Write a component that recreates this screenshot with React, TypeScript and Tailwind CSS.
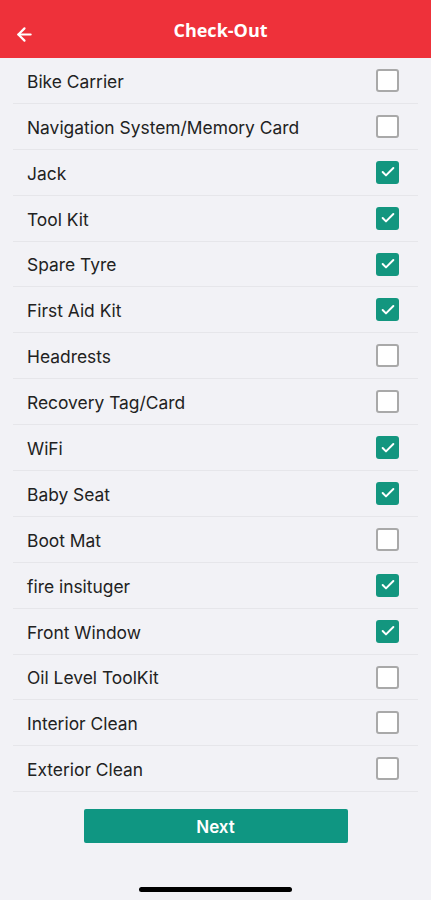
import { ArrowLeft, Check } from "lucide-react";

const items = [
  { label: "Bike Carrier", checked: false },
  { label: "Navigation System/Memory Card", checked: false },
  { label: "Jack", checked: true },
  { label: "Tool Kit", checked: true },
  { label: "Spare Tyre", checked: true },
  { label: "First Aid Kit", checked: true },
  { label: "Headrests", checked: false },
  { label: "Recovery Tag/Card", checked: false },
  { label: "WiFi", checked: true },
  { label: "Baby Seat", checked: true },
  { label: "Boot Mat", checked: false },
  { label: "fire insituger", checked: true },
  { label: "Front Window", checked: true },
  { label: "Oil Level ToolKit", checked: false },
  { label: "Interior Clean", checked: false },
  { label: "Exterior Clean", checked: false },
];

export default function App() {
  return (
    <div
      className="flex h-[900px] w-[431px] flex-col bg-[#f2f2f6]"
      style={{ fontFamily: 'Inter, "Liberation Sans", sans-serif' }}
    >
      <header className="relative flex h-[58px] items-center justify-center bg-[#ee313a]">
        <ArrowLeft className="absolute left-[14px] top-[24px] h-[21px] w-[21px] text-white" strokeWidth={2.5} />
        <h1 className="ml-[10px] mt-[3px] text-[18px] font-bold text-white" style={{ fontFamily: '"Open Sans", sans-serif' }}>
          Check-Out
        </h1>
      </header>

      <ul className="mx-[13px]">
        {items.map((item) => (
          <li
            key={item.label}
            className="flex h-[45.9px] items-center justify-between border-b border-[#e6e6ea] pl-[14px] pr-[19px]"
          >
            <span className="pt-[3px] text-[17.4px] text-[#222]">{item.label}</span>
            {item.checked ? (
              <span className="flex h-[23px] w-[23px] items-center justify-center rounded-[3px] bg-[#13967f]">
                <Check className="h-[16px] w-[16px] text-white" strokeWidth={3} />
              </span>
            ) : (
              <span className="h-[23px] w-[23px] rounded-[3px] border-2 border-[#a9a9a9] bg-white" />
            )}
          </li>
        ))}
      </ul>

      <div className="mt-[17px] flex justify-center">
        <button className="h-[34px] w-[264px] rounded-[2px] bg-[#0f9682] pt-[2px] text-[17px] font-semibold text-white">
          Next
        </button>
      </div>

      <div className="mt-auto mb-[8px] flex justify-center">
        <div className="h-[5px] w-[153px] rounded-full bg-black" />
      </div>
    </div>
  );
}
